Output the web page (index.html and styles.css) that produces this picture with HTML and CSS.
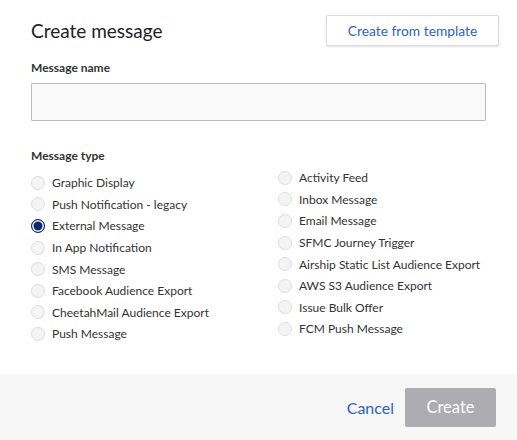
FILE: index.html
```html
<!DOCTYPE html>
<html>
<head>
<meta charset="utf-8">
<link rel="stylesheet" href="styles.css">
</head>
<body>
<div class="dialog">
  <div class="body">
    <div class="header">
      <h1 class="title">Create message</h1>
      <button class="btn-outline">Create from template</button>
    </div>
    <label class="field-label">Message name</label>
    <input class="text-input" type="text">
    <div class="field-label type-label">Message type</div>
    <div class="types">
      <ul class="col">
        <li><span class="radio"></span>Graphic Display</li>
        <li><span class="radio"></span>Push Notification - legacy</li>
        <li><span class="radio checked"></span>External Message</li>
        <li><span class="radio"></span>In App Notification</li>
        <li><span class="radio"></span>SMS Message</li>
        <li><span class="radio"></span>Facebook Audience Export</li>
        <li><span class="radio"></span>CheetahMail Audience Export</li>
        <li><span class="radio"></span>Push Message</li>
      </ul>
      <ul class="col col-right">
        <li><span class="radio"></span>Activity Feed</li>
        <li><span class="radio"></span>Inbox Message</li>
        <li><span class="radio"></span>Email Message</li>
        <li><span class="radio"></span>SFMC Journey Trigger</li>
        <li><span class="radio"></span>Airship Static List Audience Export</li>
        <li><span class="radio"></span>AWS S3 Audience Export</li>
        <li><span class="radio"></span>Issue Bulk Offer</li>
        <li><span class="radio"></span>FCM Push Message</li>
      </ul>
    </div>
  </div>
  <div class="footer">
    <a class="link">Cancel</a>
    <button class="btn-primary">Create</button>
  </div>
</div>
</body>
</html>
```
FILE: styles.css
```css
html, body {
  margin: 0;
  padding: 0;
  background: #fff;
}

body {
  font-family: "Lato", "Liberation Sans", sans-serif;
  color: #333;
}

.dialog {
  width: 517px;
  height: 440px;
  display: flex;
  flex-direction: column;
}

.body {
  flex: 1;
  padding: 15px 18px 0 31px;
}

.header {
  display: flex;
  justify-content: space-between;
  align-items: center;
  height: 31px;
}

.title {
  margin: 0;
  font-size: 19px;
  font-weight: 400;
  color: #222;
}

.btn-outline {
  width: 173px;
  height: 31px;
  background: #fff;
  border: 1px solid #dcdcdc;
  border-radius: 2px;
  box-shadow: 0 1px 2px rgba(0, 0, 0, 0.12);
  color: #2f5fc4;
  font-family: inherit;
  font-size: 13.8px;
  padding: 0;
}

.field-label {
  display: block;
  font-size: 12px;
  font-weight: 700;
  color: #333;
  margin-top: 15px;
  line-height: 14px;
}

.text-input {
  display: block;
  box-sizing: border-box;
  width: 455px;
  height: 38px;
  margin-top: 8px;
  background: #f9f9f9;
  border: 1px solid #bdbdbd;
  border-radius: 1px;
}

.type-label {
  margin-top: 28px;
}

.types {
  display: flex;
  margin-top: 9px;
}

.col {
  list-style: none;
  margin: 0;
  padding: 0;
  width: 247px;
  flex: none;
}

.col-right {
  margin-top: -5px;
}

.col li {
  display: flex;
  align-items: center;
  height: 21.6px;
  font-size: 12px;
  color: #333;
}

.radio {
  box-sizing: border-box;
  width: 14px;
  height: 14px;
  border-radius: 50%;
  border: 1px solid #dedede;
  background: #f4f4f4;
  margin-right: 7px;
  flex: none;
}

.radio.checked {
  border: 1.5px solid #0d2a6e;
  background: #0d2a6e;
  box-shadow: inset 0 0 0 1.5px #fff;
}

.footer {
  height: 66px;
  background: #f7f7f7;
  display: flex;
  justify-content: flex-end;
  align-items: center;
  padding-right: 21px;
  gap: 11px;
}

.link {
  color: #2f5fc4;
  font-size: 16px;
}

.btn-primary {
  width: 91px;
  height: 39px;
  border: none;
  border-radius: 2px;
  background: #adacb0;
  color: #fff;
  font-family: inherit;
  font-size: 16.5px;
  padding: 0;
}
```
